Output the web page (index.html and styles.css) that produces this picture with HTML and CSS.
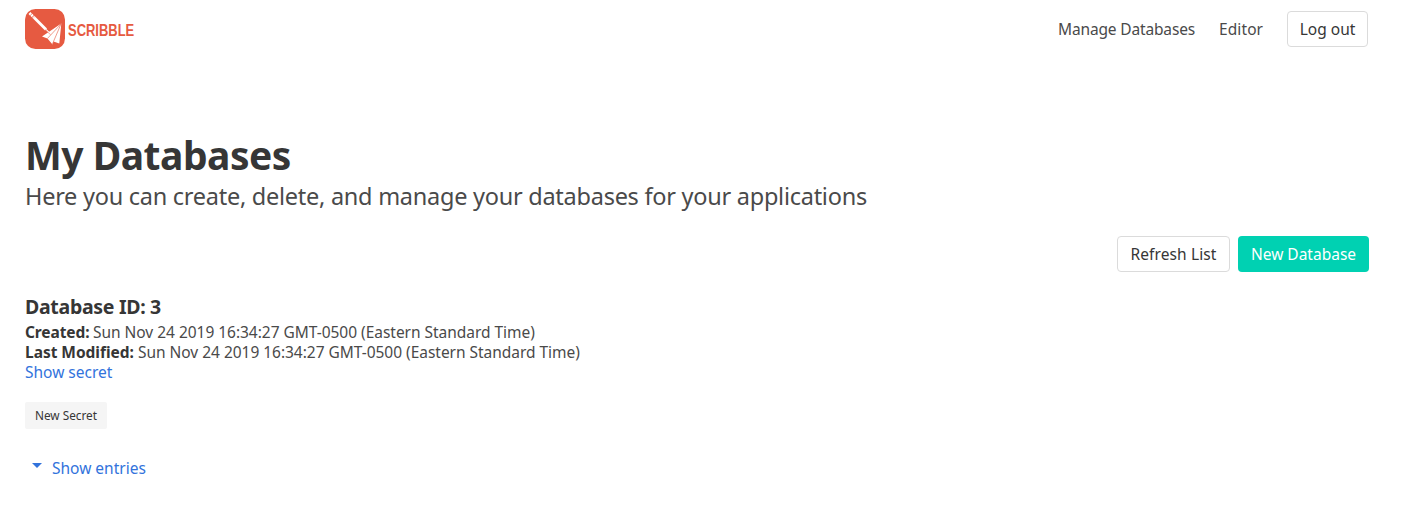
FILE: index.html
```html
<!DOCTYPE html>
<html lang="en">
<head>
<meta charset="utf-8">
<title>Scribble</title>
<link rel="stylesheet" href="styles.css">
</head>
<body>
<nav class="navbar">
  <a class="brand">
    <svg class="brand-icon" viewBox="0 0 40 40">
      <rect width="40" height="40" rx="10.5" fill="#e65a41"/>
      <path d="M4.5 4L9 8.5" stroke="#fff" stroke-width="2.8" stroke-dasharray="2 .6"/>
      <path d="M9 8.5L21 20.5" stroke="#fff" stroke-width="2.8"/>
      <path d="M21 20.5L26 25.5" stroke="#fff" stroke-width="1.3"/>
      <path d="M36.3 14.5L17 27.5L22.5 29.5L27.5 35.5L28.5 32.5L34.3 34.5Z" fill="#fff"/>
      <path d="M36 15L22.5 29.4M36 15L28.5 32.5L27.5 35" fill="none" stroke="#e65a41" stroke-width=".6"/>
      <path d="M20.5 20.8L25.5 25.8" stroke="#e65a41" stroke-width=".5"/>
    </svg>
    <span class="brand-name">SCRIBBLE</span>
  </a>
  <div class="nav-links">
    <a class="nav-manage">Manage Databases</a>
    <a class="nav-editor">Editor</a>
    <button class="button logout">Log out</button>
  </div>
</nav>
<main class="page">
  <h1 class="title">My Databases</h1>
  <p class="subtitle">Here you can create, delete, and manage your databases for your applications</p>
  <div class="actions">
    <button class="button refresh">Refresh List</button>
    <button class="button primary">New Database</button>
  </div>
  <section class="database">
    <h2 class="database-id">Database ID: 3</h2>
    <p class="row"><strong class="created">Created:</strong><span class="date">Sun Nov 24 2019 16:34:27 GMT-0500 (Eastern Standard Time)</span></p>
    <p class="row"><strong class="modified">Last Modified:</strong><span class="date">Sun Nov 24 2019 16:34:27 GMT-0500 (Eastern Standard Time)</span></p>
    <p class="row"><a class="link secret">Show secret</a></p>
    <button class="new-secret">New Secret</button>
    <div class="entries">
      <svg class="caret" viewBox="0 0 10 5"><path d="M0 0H10L5 5Z" fill="#3273dc"/></svg>
      <a class="link show-entries">Show entries</a>
    </div>
  </section>
</main>
</body>
</html>
```
FILE: styles.css
```css
* { box-sizing: border-box; margin: 0; padding: 0; }
body {
  background: #fff;
  color: #4a4a4a;
  font: 15.5px/20px "Noto Sans", "Open Sans", sans-serif;
  white-space: nowrap;
}
.navbar {
  display: flex;
  justify-content: space-between;
  align-items: center;
  height: 58px;
  padding: 0 41px 0 25px;
}
.brand { display: flex; align-items: center; gap: 3px; }
.brand-icon { width: 40px; height: 40px; }
.brand-name {
  padding-top: 1px;
  color: #e65a41;
  font: bold 16.5px/20px "Liberation Sans Narrow", "Liberation Sans", sans-serif;
  transform: scaleX(.785);
  transform-origin: left;
}
.nav-links { display: flex; align-items: center; }
.nav-manage { width: 161px; letter-spacing: -.15px; }
.nav-editor { width: 68px; letter-spacing: .1px; }
.button {
  height: 36px;
  border: 1px solid #dbdbdb;
  border-radius: 4px;
  background: #fff;
  color: #363636;
  font: inherit;
}
.logout { width: 81px; }
.page { padding: 74px 40px 0 25px; }
.title { color: #363636; font-size: 39px; line-height: 45px; font-weight: 700; letter-spacing: -.5px; }
.subtitle { margin-top: 4px; font-size: 23.5px; line-height: 30px; letter-spacing: -.26px; }
.actions { display: flex; justify-content: flex-end; gap: 8px; margin-top: 25px; }
.refresh { width: 113px; letter-spacing: .1px; }
.primary { width: 131px; border-color: transparent; background: #00d1b2; background-clip: border-box; color: #fff; }
.database { margin-top: 22px; }
.database-id { color: #363636; font-size: 19.5px; line-height: 26px; font-weight: 700; letter-spacing: -.3px; margin-bottom: 2px; }
.row { display: flex; height: 20px; }
.row strong { color: #363636; font-weight: 700; }
.created { width: 68px; letter-spacing: -.1px; }
.modified { width: 113px; letter-spacing: -.03px; }
.date { letter-spacing: -.03px; }
.link { color: #3273dc; }
.new-secret {
  display: block;
  width: 82px;
  height: 27px;
  margin-top: 20px;
  border: 0;
  border-radius: 2px;
  background: #f5f5f5;
  color: #363636;
  font: 11.8px/27px "Noto Sans", sans-serif;
}
.entries { display: flex; align-items: center; margin-top: 29px; padding-left: 7px; }
.caret { width: 10px; height: 5px; margin: 0 10px 5px 0; }
```
